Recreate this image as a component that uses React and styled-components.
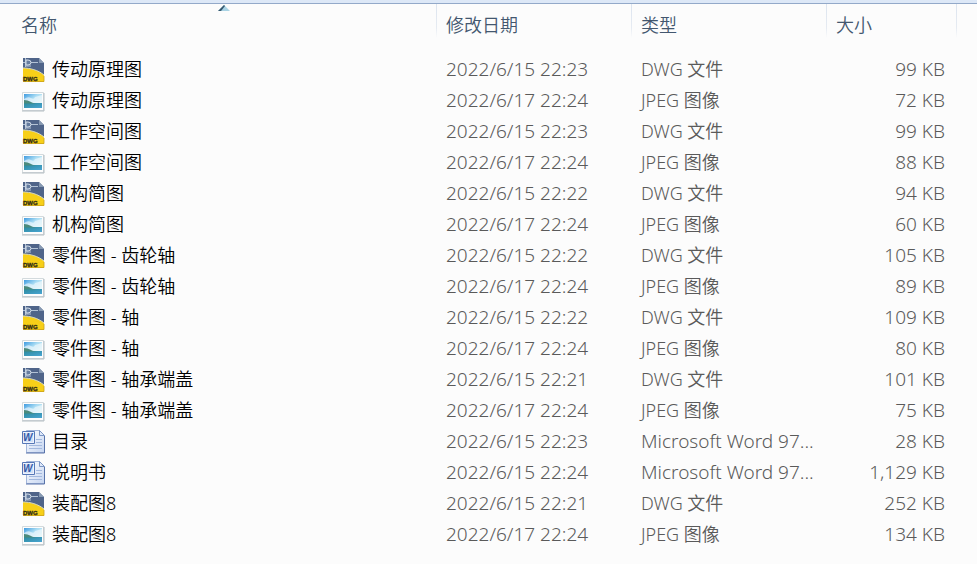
import React from 'react';
import styled, { createGlobalStyle } from 'styled-components';

const columns = [
  { id: 'name', title: '名称', sorted: true },
  { id: 'date', title: '修改日期' },
  { id: 'type', title: '类型' },
  { id: 'size', title: '大小' },
];

const types = {
  dwg: 'DWG 文件',
  jpeg: 'JPEG 图像',
  word: 'Microsoft Word 97...',
};

const files = [
  { name: '传动原理图', date: '2022/6/15 22:23', kind: 'dwg', size: '99 KB' },
  { name: '传动原理图', date: '2022/6/17 22:24', kind: 'jpeg', size: '72 KB' },
  { name: '工作空间图', date: '2022/6/15 22:23', kind: 'dwg', size: '99 KB' },
  { name: '工作空间图', date: '2022/6/17 22:24', kind: 'jpeg', size: '88 KB' },
  { name: '机构简图', date: '2022/6/15 22:22', kind: 'dwg', size: '94 KB' },
  { name: '机构简图', date: '2022/6/17 22:24', kind: 'jpeg', size: '60 KB' },
  { name: '零件图 - 齿轮轴', date: '2022/6/15 22:22', kind: 'dwg', size: '105 KB' },
  { name: '零件图 - 齿轮轴', date: '2022/6/17 22:24', kind: 'jpeg', size: '89 KB' },
  { name: '零件图 - 轴', date: '2022/6/15 22:22', kind: 'dwg', size: '109 KB' },
  { name: '零件图 - 轴', date: '2022/6/17 22:24', kind: 'jpeg', size: '80 KB' },
  { name: '零件图 - 轴承端盖', date: '2022/6/15 22:21', kind: 'dwg', size: '101 KB' },
  { name: '零件图 - 轴承端盖', date: '2022/6/17 22:24', kind: 'jpeg', size: '75 KB' },
  { name: '目录', date: '2022/6/15 22:23', kind: 'word', size: '28 KB' },
  { name: '说明书', date: '2022/6/15 22:24', kind: 'word', size: '1,129 KB' },
  { name: '装配图8', date: '2022/6/15 22:21', kind: 'dwg', size: '252 KB' },
  { name: '装配图8', date: '2022/6/17 22:24', kind: 'jpeg', size: '134 KB' },
];

const DwgIcon = () => (
  <Icon viewBox='0 0 24 24' aria-hidden='true'>
    <path d='M2 0h16l5 5v19H2z' fill='#4f6489' />
    <path d='M2 10C9 10 17 12 23 17v7H2z' fill='#f7cf18' />
    <path d='M2 10C9 10 17 12 23 17' fill='none' stroke='#d8d9bd' strokeWidth='1' />
    <path d='M18 0v5h5z' fill='#8799b2' />
    <path d='M2 4.500h4M10 4.500h7M4.500 0v9M4 8h6' stroke='#b3c2d5' strokeWidth='1' />
    <path d='M5 2h2q3 0 3 2.500T7 7H5z' fill='#657c9f' stroke='#d6e0eb' strokeWidth='1' />
    <path d='M2 23.500h21V18' fill='none' stroke='#c9a11c' strokeWidth='.8' />
    <text x='2' y='23' fontFamily='Liberation Sans, sans-serif' fontSize='6' fontWeight='700' fill='#302b16' stroke='#302b16' strokeWidth='.3'>
      DWG
    </text>
  </Icon>
);

const JpegIcon = () => (
  <Icon viewBox='0 0 24 24' aria-hidden='true'>
    <defs>
      <linearGradient id='sky' x1='0' y1='0' x2='1' y2='1'>
        <stop offset='0' stopColor='#3f9be0' />
        <stop offset='.4' stopColor='#a9dcf3' />
        <stop offset='1' stopColor='#e9f7f2' />
      </linearGradient>
      <linearGradient id='sea' x1='0' y1='0' x2='1' y2='1'>
        <stop offset='0' stopColor='#2b8a9c' />
        <stop offset='1' stopColor='#4aa5d3' />
      </linearGradient>
    </defs>
    <path d='M1.500 3.500h21v18h-21z' fill='#fdfdfd' stroke='#d3dadd' />
    <path d='M1 22h22V4' fill='none' stroke='#b4bdc2' strokeWidth='1' />
    <path d='M3 5h18v14H3z' fill='url(#sky)' />
    <path d='M3 10q4-3 7-1t4-1l7-2v8H3z' fill='#fff' opacity='.55' />
    <path d='M3 14h18v5H3z' fill='url(#sea)' />
    <path d='M3 11q4 0 6 1.500t6 2H3z' fill='#4b8a7c' />
  </Icon>
);

const WordIcon = () => (
  <Icon viewBox='0 0 24 24' aria-hidden='true'>
    <defs>
      <linearGradient id='page' x1='0' y1='0' x2='1' y2='1'>
        <stop offset='0' stopColor='#fff' />
        <stop offset='1' stopColor='#c5d5f1' />
      </linearGradient>
    </defs>
    <path d='M5.500.500h13l5 5v17h-18z' fill='url(#page)' stroke='#a3b6da' />
    <path d='M23.500 6v17H5' fill='none' stroke='#5873a9' strokeWidth='1' />
    <path d='M18.500.500v5h5z' fill='#dfe9fa' stroke='#7c96c5' />
    <path d='M15 9.500h6M15 12.500h6M8 15.500h13M8 18.500h13' stroke='#a3b9de' />
    <path d='M1.500 1.500h12v12h-12z' fill='#edf3fd' stroke='#5778b7' />
    <path d='M3 3h9v9H3z' fill='#d3e0f6' />
    <text x='2' y='11' fontFamily='Liberation Sans, sans-serif' fontSize='10' fontStyle='italic' fontWeight='700' fill='#345aa8'>
      W
    </text>
  </Icon>
);

const icons = { dwg: DwgIcon, jpeg: JpegIcon, word: WordIcon };

const FileRow = ({ file }) => {
  const { name, date, kind, size } = file;
  const KindIcon = icons[kind];
  return (
    <Row>
      <Cell $name>
        <FileName>
          <KindIcon />
          <span>{name}</span>
        </FileName>
      </Cell>
      <Cell $latin>{date}</Cell>
      <Cell $latin={kind === 'word'}>{types[kind]}</Cell>
      <Cell $latin $end>
        {size}
      </Cell>
    </Row>
  );
};

export default function App() {
  return (
    <>
      <GlobalStyle />
      <Explorer>
        <FileTable>
          <colgroup>
            <Column />
            <Column $width='195px' />
            <Column $width='195px' />
            <Column $width='130px' />
            <Column $width='21px' />
          </colgroup>
          <thead>
            <tr>
              {columns.map(({ id, title, sorted }) => (
                <HeaderCell key={id} $first={sorted} scope='col' aria-sort={sorted ? 'ascending' : undefined}>
                  {sorted && (
                    <SortArrow viewBox='0 0 12 6' aria-hidden='true'>
                      <path d='M0 6L6 0l6 6z' fill='#a9d3e4' />
                      <path d='M0 6L6 0l1 1-4 5z' fill='#36586f' />
                    </SortArrow>
                  )}
                  <SortButton type='button' $first={sorted}>
                    {title}
                  </SortButton>
                </HeaderCell>
              ))}
              <HeaderEnd />
            </tr>
          </thead>
          <tbody>
            {files.map((file, index) => (
              <FileRow key={index} file={file} />
            ))}
          </tbody>
        </FileTable>
      </Explorer>
    </>
  );
}

const GlobalStyle = createGlobalStyle`
  body {
    margin: 0;
    background: #fcfcfc;
    font-family: 'Noto Sans', 'Noto Sans CJK SC', sans-serif;
    font-size: 18px;
    font-weight: 350;
  }
`;

const Explorer = styled.main`
  border-top: 3px solid #dde8f7;
`;

const FileTable = styled.table`
  width: 100%;
  table-layout: fixed;
  border-collapse: separate;
  border-spacing: 0;
  border-top: 1px solid #93a9c9;
`;

const Column = styled.col`
  width: ${({ $width }) => $width || 'auto'};
`;

const HeaderCell = styled.th`
  position: relative;
  height: 50px;
  padding: 0;
  font-weight: 350;
  vertical-align: top;
  background: linear-gradient(#dce4ef, #e6ebf2 24px, #fcfcfc 34px) left top / ${({ $first }) => ($first ? '0' : '1px')} 34px no-repeat;
`;

const HeaderEnd = styled.td`
  background: linear-gradient(#dce4ef, #e6ebf2 24px, #fcfcfc 34px) left top / 1px 34px no-repeat;
`;

const SortButton = styled.button`
  display: block;
  width: 100%;
  height: 40px;
  padding: 0 0 0 ${({ $first }) => ($first ? '21px' : '10px')};
  border: 0;
  background: none;
  color: #43576f;
  font: inherit;
  text-align: left;
  cursor: pointer;
`;

const SortArrow = styled.svg`
  position: absolute;
  top: 1px;
  left: calc(50% + 6px);
  transform: translateX(-50%);
  width: 12px;
  height: 6px;
`;

const Row = styled.tr`
  height: 31px;
`;

const Cell = styled.td`
  height: 31px;
  padding: 0 ${({ $end }) => ($end ? '11px' : '0')} 0 ${({ $name }) => ($name ? '21px' : '10px')};
  color: ${({ $name }) => ($name ? '#000' : '#5a5a5a')};
  font-size: ${({ $latin }) => ($latin ? '19px' : '18px')};
  line-height: 30px;
  text-align: ${({ $end }) => ($end ? 'right' : 'left')};
  vertical-align: top;
  white-space: nowrap;
`;

const FileName = styled.div`
  display: flex;
  align-items: center;
  gap: 7px;
  height: 31px;

  span {
    height: 31px;
  }
`;

const Icon = styled.svg`
  flex: none;
  width: 24px;
  height: 24px;
`;
